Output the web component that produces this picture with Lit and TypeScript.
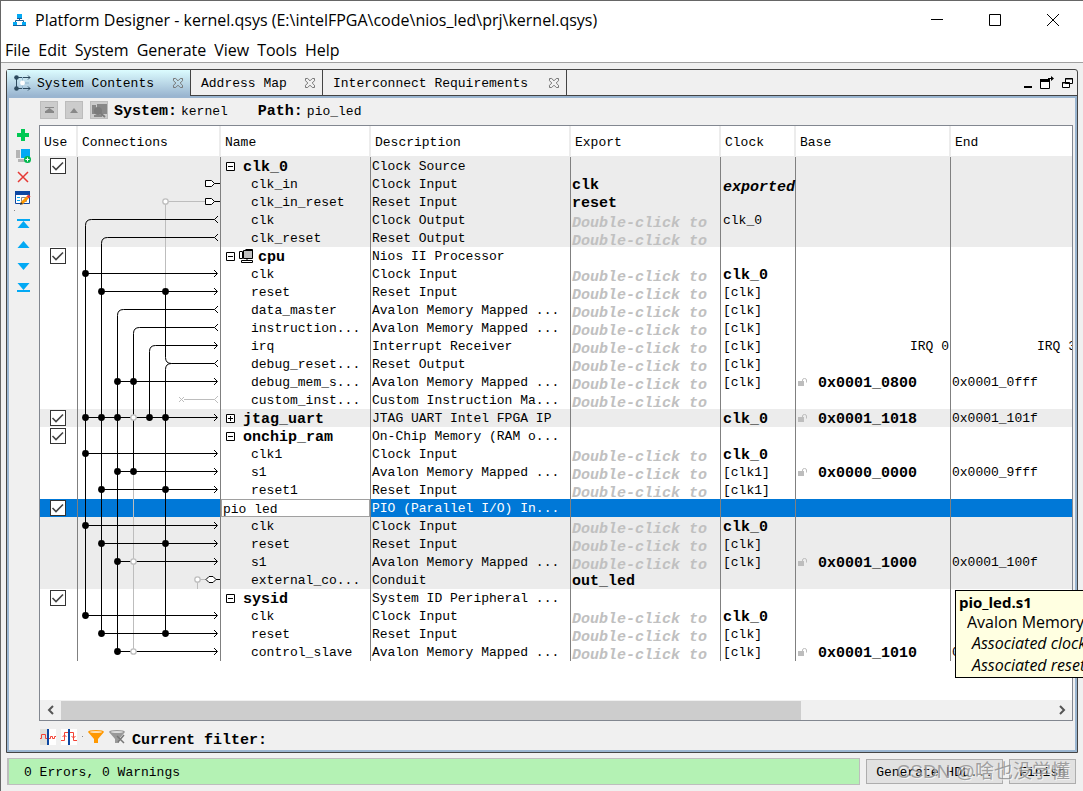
import { LitElement, html, css, svg, nothing } from "lit";
import { customElement, state } from "lit/decorators.js";
import { classMap } from "lit/directives/class-map.js";

type Row = {
  name: string;
  desc: string;
  parent?: boolean;
  collapsed?: boolean;
  cpu?: boolean;
  selected?: boolean;
  shade?: boolean;
  exp?: string;
  ask?: boolean;
  clock?: string;
  clockStyle?: "bold" | "exported";
  base?: string;
  end?: string;
  irq?: boolean;
};

const AVALON = "Avalon Memory Mapped ...";

const ROWS: Row[] = [
  { name: "clk_0", desc: "Clock Source", parent: true, shade: true },
  { name: "clk_in", desc: "Clock Input", shade: true, exp: "clk", clock: "exported", clockStyle: "exported" },
  { name: "clk_in_reset", desc: "Reset Input", shade: true, exp: "reset" },
  { name: "clk", desc: "Clock Output", shade: true, ask: true, clock: "clk_0" },
  { name: "clk_reset", desc: "Reset Output", shade: true, ask: true },
  { name: "cpu", desc: "Nios II Processor", parent: true, cpu: true },
  { name: "clk", desc: "Clock Input", ask: true, clock: "clk_0", clockStyle: "bold" },
  { name: "reset", desc: "Reset Input", ask: true, clock: "[clk]" },
  { name: "data_master", desc: AVALON, ask: true, clock: "[clk]" },
  { name: "instruction...", desc: AVALON, ask: true, clock: "[clk]" },
  { name: "irq", desc: "Interrupt Receiver", ask: true, clock: "[clk]", irq: true },
  { name: "debug_reset...", desc: "Reset Output", ask: true, clock: "[clk]" },
  { name: "debug_mem_s...", desc: AVALON, ask: true, clock: "[clk]", base: "0x0001_0800", end: "0x0001_0fff" },
  { name: "custom_inst...", desc: "Custom Instruction Ma...", ask: true },
  { name: "jtag_uart", desc: "JTAG UART Intel FPGA IP", parent: true, collapsed: true, shade: true, clock: "clk_0", clockStyle: "bold", base: "0x0001_1018", end: "0x0001_101f" },
  { name: "onchip_ram", desc: "On-Chip Memory (RAM o...", parent: true },
  { name: "clk1", desc: "Clock Input", ask: true, clock: "clk_0", clockStyle: "bold" },
  { name: "s1", desc: AVALON, ask: true, clock: "[clk1]", base: "0x0000_0000", end: "0x0000_9fff" },
  { name: "reset1", desc: "Reset Input", ask: true, clock: "[clk1]" },
  { name: "pio led", desc: "PIO (Parallel I/O) In...", parent: true, selected: true },
  { name: "clk", desc: "Clock Input", shade: true, ask: true, clock: "clk_0", clockStyle: "bold" },
  { name: "reset", desc: "Reset Input", shade: true, ask: true, clock: "[clk]" },
  { name: "s1", desc: AVALON, shade: true, ask: true, clock: "[clk]", base: "0x0001_1000", end: "0x0001_100f" },
  { name: "external_co...", desc: "Conduit", shade: true, exp: "out_led" },
  { name: "sysid", desc: "System ID Peripheral ...", parent: true },
  { name: "clk", desc: "Clock Input", ask: true, clock: "clk_0", clockStyle: "bold" },
  { name: "reset", desc: "Reset Input", ask: true, clock: "[clk]" },
  { name: "control_slave", desc: AVALON, ask: true, clock: "[clk]", base: "0x0001_1010", end: "0x0001_1017" },
];

const ROW_H = 18;
const BUS = [7.5, 23.5, 39.5, 55.5, 71.5, 87.5];
const y = (row: number) => row * ROW_H + 8.5;

/* Input rows: row index followed by the buses that the wire touches. */
const TAPS: [number, number[]][] = [
  [6, [0]],
  [7, [1, 5]],
  [12, [2, 3]],
  [14, [0, 1, 2, 4, 5]],
  [16, [0]],
  [17, [2, 3]],
  [18, [1, 5]],
  [20, [0]],
  [21, [1, 5]],
  [22, [2]],
  [25, [0]],
  [26, [1, 5]],
  [27, [2]],
];

/* Buses that start at a row with a rounded corner: bus, first row, last row. */
const SOURCES: [number, number, number][] = [
  [0, 3, 25],
  [1, 4, 26],
  [2, 8, 27],
  [3, 9, 17],
  [4, 10, 14],
];

const tip = (row: number) => `M136 ${y(row) - 3.5}L139.5 ${y(row)}L136 ${y(row) + 3.5}`;
const fork = (row: number) => `M140 ${y(row) - 3.5}L136.5 ${y(row)}L140 ${y(row) + 3.5}`;
const pin = (row: number) => `M127.5 ${y(row) - 3}h6l3 3l-3 3h-6zM136.5 ${y(row)}H142`;

function connections() {
  return svg`
    <g fill="none" stroke="#bdbdbd">
      <path d="M${BUS[5]} ${y(2)}V${y(7)}M${BUS[5]} ${y(2)}H127"/>
      <path d="M${BUS[3]} ${y(17)}V${y(27)}"/>
      <path d="M119.5 ${y(23)}V${24 * ROW_H}M119.5 ${y(23)}H128"/>
      <path d="M101 ${y(13) - 2.5}l5 5m0-5l-5 5M106 ${y(13)}H136.5${fork(13)}"/>
    </g>
    <g fill="none" stroke="#000">
      ${SOURCES.map(([b, from, to]) => svg`
        <path d="M${BUS[b]} ${y(to)}V${y(from) + 6}Q${BUS[b]} ${y(from)} ${BUS[b] + 6} ${y(from)}H${b === 4 ? 139 : 136.5}"/>`)}
      <path d="M${BUS[5]} ${y(7)}V${y(11) - 6}Q${BUS[5]} ${y(11)} ${BUS[5] + 6} ${y(11)}H136.5"/>
      <path d="M${BUS[5]} ${y(26)}V${y(11) + 6}Q${BUS[5]} ${y(11)} ${BUS[5] + 6} ${y(11)}"/>
      ${TAPS.map(([r, b]) => svg`<path d="M${BUS[b[0]]} ${y(r)}H139${tip(r)}"/>`)}
      <path d="${tip(10)}${fork(3)}${fork(4)}${fork(8)}${fork(9)}${fork(11)}"/>
      <path fill="#fff" d="${pin(1)}${pin(2)}"/>
      <path fill="#fff" d="M128 ${y(23)}l3-3h4l3 3l-3 3h-4zM138 ${y(23)}H142"/>
    </g>
    ${TAPS.map(([r, bs]) => bs.map((b) => svg`<circle cx="${BUS[b]}" cy="${y(r)}" r="3.4"/>`))}
    <g fill="#fff" stroke="#bdbdbd" stroke-width="1.3">
      <circle cx="${BUS[5]}" cy="${y(2)}" r="2.7"/>
      <circle cx="${BUS[3]}" cy="${y(14)}" r="2.7"/>
      <circle cx="${BUS[3]}" cy="${y(22)}" r="2.7"/>
      <circle cx="${BUS[3]}" cy="${y(27)}" r="2.7"/>
      <circle cx="119.5" cy="${y(23)}" r="2.7"/>
    </g>`;
}

const closeGlyph = html`<svg width="12" height="12" viewBox="0 0 12 12" fill="none" stroke="#777">
  <path d="M1.5 1.5h2.2L6 3.8l2.3-2.3h2.2v2.2L8.2 6l2.3 2.3v2.2H8.3L6 8.2l-2.3 2.3H1.5v-2.2L3.8 6L1.5 3.7z"/></svg>`;

const lock = html`<svg width="10" height="9" viewBox="0 0 10 9">
  <path fill="#bdbdbd" d="M0 3h6v5H0z"/><path fill="none" stroke="#bdbdbd" d="M4.5 3V2q0-1.500 2-1.500t2 1.500v2.500"/></svg>`;

@customElement("app-root")
export class AppRoot extends LitElement {
  static styles = css`
    :host {
      --mono: "Liberation Mono", monospace;
      --ui: "Open Sans", "Noto Sans", sans-serif;
      --face: #f0f0f0;
      --dark: #444;
      --edge: #9ab5d0;
      --grid: #808080;
      display: flex;
      flex-direction: column;
      position: relative;
      box-sizing: border-box;
      height: 100vh;
      overflow: hidden;
      border: 1px solid #666;
      border-width: 1px 0 0 1px;
      background: var(--face);
      color: #000;
      font: 13px/18px var(--mono);
    }
    *, *::before { box-sizing: border-box; }
    svg { display: block; flex: none; }
    button {
      font: inherit;
      color: inherit;
      padding: 0;
      border: 0;
      background: none;
      display: flex;
      align-items: center;
      justify-content: center;
    }
    b, .bold { font-size: 15px; font-weight: 700; }

    .title { display: flex; align-items: center; height: 37px; background: #fff; padding: 0 1px 0 11px; font: 16px/20px var(--ui); }
    .title h1 { flex: 1; margin: 0 0 0 8px; font: inherit; white-space: nowrap; }
    .title button { width: 58px; height: 37px; }
    .menu { display: flex; gap: 8px; height: 25px; padding-left: 4px; background: #fff; border-bottom: 1px solid #a0a0a0; font: 16px/24px var(--ui); }
    .menu button { white-space: nowrap; }

    .panel { flex: 1; min-height: 0; display: flex; flex-direction: column; margin: 6px 5px 0; border: 1px solid var(--dark); border-radius: 3px 3px 0 0; }
    .tabs { display: flex; height: 26px; border-bottom: 1px solid var(--dark); }
    .tab { display: flex; align-items: center; justify-content: space-between; padding: 0 6px 0 10px; border-right: 1px solid var(--dark); white-space: nowrap; }
    .tab.t1 { width: 184px; padding-left: 7px; margin-bottom: -1px; background: linear-gradient(#dcfcff, #9ab5d0); }
    .tab.t2 { width: 132px; }
    .tab.t3 { width: 244px; }
    .tab .label { display: flex; align-items: center; gap: 6px; }
    .tab .text { padding-top: 2px; }
    .winops { display: flex; align-items: center; gap: 8px; margin-left: auto; padding-right: 3px; }

    .body { flex: 1; min-height: 0; display: flex; border: 2px solid var(--edge); }
    .side { width: 30px; display: flex; flex-direction: column; align-items: center; padding: 26px 2px 0 0; }
    .side button { width: 18px; height: 21px; }
    .side .dot { width: 1px; height: 1px; margin: 2px 18px 2px 0; background: #888; }
    .main { flex: 1; min-width: 0; display: flex; flex-direction: column; padding-right: 2px; }
    .path { display: flex; align-items: center; height: 24px; margin-bottom: 3px; padding-left: 1px; }
    .path button { width: 18px; height: 18px; margin-right: 7px; background: #ccc; border: 1px solid #bcbcbc; }
    .path b { margin-right: 4px; padding-top: 4px; }
    .path span { padding-top: 3px; }
    .path .sys { margin-right: 30px; }
    .path button + b { margin-left: -1px; }

    .grid { flex: 1; min-height: 0; display: flex; flex-direction: column; border: 1px solid #828790; background: #fff; }
    .view { flex: 1; min-height: 0; overflow: hidden; }
    table { table-layout: fixed; border-collapse: separate; border-spacing: 0; width: calc(100% + 5px); }
    th { height: 31px; padding: 4px 0 0 4px; text-align: left; font-weight: 400; background: #fff; border-bottom: 1px solid #ececec; box-shadow: inset -2px 0 #ececec; }
    .c-use { width: 38px; }
    .c-conn { width: 143px; }
    .c-name { width: 150px; }
    .c-desc { width: 200px; }
    .c-clock { width: 75px; }
    .c-base { width: 155px; }
    td { height: 18px; padding: 0 0 0 1px; white-space: nowrap; border-right: 1px solid var(--grid); line-height: 18px; }
    td:last-child, th:last-child { border-right: 0; box-shadow: none; }
    tr.shade td { background: #ececec; }
    tr.sel td { background: #0078d7; color: #fff; }
    .cell { display: flex; align-items: center; height: 18px; padding-top: 2px; }
    .cell.bold { padding-top: 4px; }
    .use { padding: 0; }
    .use input {
      appearance: none; display: block; width: 16px; height: 16px; margin: 1px 0 1px 10px; border: 1px solid #333;
      background: #fff url("data:image/svg+xml,%3Csvg xmlns='http://www.w3.org/2000/svg' viewBox='0 0 14 14'%3E%3Cpath d='M1.5 7l3.500 3.500L12 3.500' fill='none' stroke='%23444' stroke-width='1.600'/%3E%3C/svg%3E");
    }
    .use input:not(:checked) { background-image: none; }
    .conn { padding: 0; }
    .wires { position: absolute; pointer-events: none; }
    .wires-anchor { height: 18px; }
    .child { padding-left: 29px; }
    .parent { padding: 0 0 0 4px; gap: 8px; }
    .parent .bold, .base .bold { padding-top: 4px; }
    .parent.cpu { gap: 4px; }
    .toggle { width: 9px; height: 9px; flex: none; }
    .edit { padding: 0; }
    .edit input { display: block; width: 100%; height: 18px; padding: 2px 0 0 1px; border: 1px solid #a0a0a0; outline: 0; background: #fff; color: #000; font: inherit; line-height: 14px; }
    .cell.ask { color: #c0c0c0; font-style: italic; font-weight: 700; font-size: 15px; padding-top: 8px; }
    .clock { padding-left: 1px; }
    .cell.exported { font-style: italic; padding-top: 8px; }
    .base { padding: 0 0 0 1px; gap: 10px; }
    .irq { justify-content: flex-end; padding-right: 1px; }

    .scroll { display: flex; height: 20px; background: var(--face); }
    .scroll button { width: 21px; }
    .track { flex: 1; padding-top: 1px; }
    .thumb { width: 74.7%; height: 19px; background: #cdcdcd; }
    .filters { display: flex; align-items: center; height: 29px; padding: 2px 0 0 1px; gap: 5px; }
    .filters .gap { width: 1px; height: 1px; background: #888; }
    .filters b { margin-left: 2px; padding-top: 8px; }

    .status { display: flex; gap: 6px; height: 38px; padding: 5px 7px 6px 6px; }
    .msg { flex: 1; display: flex; align-items: center; padding: 2px 0 0 15px; border: 1px solid #bdbdbd; border-left-width: 2px; background: #b4f2b4; }
    .status button { height: 25px; margin-top: 1px; padding: 2px 9px 0; border: 1px solid #adadad; background: #e1e1e1; white-space: nowrap; }
    .mark { position: absolute; right: 13px; bottom: 5px; font: 19px/28px "Liberation Sans", "Noto Sans CJK SC", sans-serif; color: rgba(140, 140, 140, 0.8); text-shadow: 1px 1px rgba(255, 255, 255, 0.6); white-space: nowrap; pointer-events: none; }

    .tip { position: absolute; left: 954px; top: 589px; width: 200px; height: 88px; padding: 1px 3px; border: 1px solid #000; background: #ffffe1; font: 16px/20px var(--ui); white-space: nowrap; }
    .tip p { margin: 0; padding-left: 8px; }
    .tip .head { padding: 0; font-size: 15px; font-weight: 700; }
    .tip .assoc { padding-left: 13px; font-style: italic; line-height: 22px; }
  `;

  @state() private unused = new Set<number>();

  private toggleUse(i: number) {
    const next = new Set(this.unused);
    next.has(i) ? next.delete(i) : next.add(i);
    this.unused = next;
  }

  private nameCell(r: Row) {
    if (r.selected) {
      return html`<td class="edit"><input aria-label="Module name" .value=${r.name} /></td>`;
    }
    if (!r.parent) return html`<td><div class="cell child">${r.name}</div></td>`;
    return html`<td><div class=${classMap({ cell: true, parent: true, cpu: !!r.cpu })}>
      <button class="toggle" aria-label=${r.collapsed ? "Expand" : "Collapse"}>
        <svg width="9" height="9" viewBox="0 0 9 9" fill="#fff" stroke="#000">
          <path d="M.5.5h8v8h-8zM2 4.5h5${r.collapsed ? "M4.5 2v5" : ""}"/></svg>
      </button>
      ${r.cpu ? html`<svg width="15" height="14" viewBox="0 0 15 14" stroke="#000">
        <path fill="#fff" d="M.5 2.5h3v7h-3z"/><path fill="#c0c0c0" d="M4.5 1.5h9v8h-9zM6.5.5h7v8"/>
        <path fill="#fff" d="M2.5 11.5h11v2h-11zM8 9.5v2"/></svg>` : nothing}
      <span class="bold">${r.name}</span></div></td>`;
  }

  private row(r: Row, i: number) {
    return html`<tr class=${classMap({ shade: !!r.shade, sel: !!r.selected })}>
      <td class="use">${r.parent ? html`<input type="checkbox" aria-label="Use ${r.name}"
        .checked=${!this.unused.has(i)} @change=${() => this.toggleUse(i)} />` : nothing}</td>
      <td class="conn">${i === 0 ? html`<div class="wires-anchor">
        <svg class="wires" width="142" height="504" viewBox="0 0 142 504">${connections()}</svg></div>` : nothing}</td>
      ${this.nameCell(r)}
      <td><div class="cell">${r.desc}</div></td>
      <td><div class=${classMap({ cell: true, ask: !!r.ask, bold: !!r.exp })}>${r.ask ? "Double-click to" : r.exp ?? nothing}</div></td>
      <td><div class=${classMap({ cell: true, clock: true, bold: !!r.clockStyle, exported: r.clockStyle === "exported" })}>${r.clock ?? nothing}</div></td>
      <td>${r.base ? html`<div class="cell base">${lock}<span class="bold">${r.base}</span></div>`
        : r.irq ? html`<div class="cell irq">IRQ 0</div>` : nothing}</td>
      <td>${r.end ? html`<div class="cell">${r.end}</div>`
        : r.irq ? html`<div class="cell irq">IRQ 3</div>` : nothing}</td>
    </tr>`;
  }

  render() {
    return html`
      <header class="title">
        <svg width="15" height="14" viewBox="0 0 15 14">
          <path fill="#03a9f4" d="M5 1h5v5H5zM1 9h4v4H1zM10 9h4v4h-4z"/>
          <path fill="none" stroke="#1b5c94" d="M3.500 9V7.500h8V9M7.500 6v2M5 12.500h5"/>
          <path fill="#1b5c94" d="M5 5h5v1H5zM1 12h4v1H1zM10 12h4v1h-4z"/></svg>
        <h1>Platform Designer - kernel.qsys (E:\\intelFPGA\\code\\nios_led\\prj\\kernel.qsys)</h1>
        <button aria-label="Minimize"><svg width="12" height="12" viewBox="0 0 12 12" stroke="#000"><path d="M0 5.500h12"/></svg></button>
        <button aria-label="Maximize"><svg width="12" height="12" viewBox="0 0 12 12" fill="none" stroke="#000"><path d="M.5.5h11v11H.5z"/></svg></button>
        <button aria-label="Close"><svg width="12" height="12" viewBox="0 0 12 12" stroke="#000"><path d="M0 0l12 12M12 0L0 12"/></svg></button>
      </header>
      <nav class="menu">
        ${["File", "Edit", "System", "Generate", "View", "Tools", "Help"].map((m) => html`<button>${m}</button>`)}
      </nav>
      <section class="panel">
        <div class="tabs">
          <div class="tab t1"><span class="label">
            <svg width="17" height="16" viewBox="0 0 17 16">
              <path fill="none" stroke="#2d4a5e" d="M2.500 3v10M4 2.500h12M4 13.500h12M14 .5l2 2-2 2M14 11.500l2 2-2 2"/>
              <path fill="none" stroke="#8fb4cc" d="M8.500 2v4M8.500 10v4M11 8h4"/>
              <circle cx="2.500" cy="2.500" r="2.300" fill="#2d4a5e"/><circle cx="2.500" cy="13.500" r="2.300" fill="#2d4a5e"/>
              <circle cx="8.500" cy="8" r="2.400" fill="#fff"/></svg>
            <span class="text">System Contents</span></span><button aria-label="Close tab">${closeGlyph}</button></div>
          <div class="tab t2"><span class="text">Address Map</span><button aria-label="Close tab">${closeGlyph}</button></div>
          <div class="tab t3"><span class="text">Interconnect Requirements</span><button aria-label="Close tab">${closeGlyph}</button></div>
          <div class="winops">
            <button aria-label="Minimize panel"><svg width="8" height="12" viewBox="0 0 8 12"><path d="M0 9h8v2H0z"/></svg></button>
            <button aria-label="Detach"><svg width="14" height="13" viewBox="0 0 14 13"><path fill="#fff" stroke="#000" d="M.5 4.500h9v8h-9z"/><path d="M0 3h10v3H0zM8 2h3V0l3 2.500L11 5V3H8z"/></svg></button>
            <button aria-label="Restore panel"><svg width="12" height="12" viewBox="0 0 12 12" fill="#fff" stroke="#000"><path d="M3.500 1.500h7v5h-7zM3 2h8M.5 5.500h7v5h-7zM0 6h8"/></svg></button>
          </div>
        </div>
        <div class="body">
          <div class="side">
            <button aria-label="Add"><svg width="12" height="12" viewBox="0 0 12 12"><path fill="#00c853" d="M4 0h4v4h4v4H8v4H4V8H0V4h4z"/></svg></button>
            <button aria-label="Add subsystem"><svg width="15" height="15" viewBox="0 0 15 15"><path fill="#b5b5b5" d="M0 2h4v8H0zM2 11h8v3H2z"/><path fill="#03a9f4" d="M5 1h9v9H5z"/><circle cx="11.500" cy="11.500" r="3.500" fill="#00b84d"/><path stroke="#fff" d="M11.500 9.500v4M9.500 11.500h4"/></svg></button>
            <button aria-label="Remove"><svg width="12" height="12" viewBox="0 0 12 12" fill="none" stroke="#e53935" stroke-width="1.500"><path d="M1 1l10 10M11 1L1 11"/></svg></button>
            <button aria-label="Edit"><svg width="16" height="14" viewBox="0 0 16 14"><path fill="#fff" stroke="#0d47a1" d="M.5.5h14v12H.5z"/><path fill="#0d47a1" d="M0 0h15v4H0z"/><path stroke="#03a9f4" d="M2 6.500h3M2 9.500h3"/><path stroke="#888" fill="none" d="M6.500 6.500h5v4h-5z"/><path stroke="#ff9800" stroke-width="3" d="M6.500 12.500l6-6"/><path stroke="#e53935" stroke-width="3" d="M12.500 6.500l2-2"/><path fill="#333" d="M5 14l1-3 2 2z"/></svg></button>
            <span class="dot"></span>
            <button aria-label="Move to top"><svg width="13" height="10" viewBox="0 0 13 10" fill="#03a9f4"><path d="M0 0h13v2H0zM6.500 2l6 7H.5z"/></svg></button>
            <button aria-label="Move up"><svg width="13" height="8" viewBox="0 0 13 8" fill="#03a9f4"><path d="M6.500 0l6 7H.5z"/></svg></button>
            <button aria-label="Move down"><svg width="13" height="8" viewBox="0 0 13 8" fill="#03a9f4"><path d="M6.500 8l6-7H.5z"/></svg></button>
            <button aria-label="Move to bottom"><svg width="13" height="10" viewBox="0 0 13 10" fill="#03a9f4"><path d="M0 8h13v2H0zM6.500 8l6-7H.5z"/></svg></button>
          </div>
          <div class="main">
            <div class="path">
              <button aria-label="Go to top"><svg width="9" height="7" viewBox="0 0 9 7" fill="#888"><path d="M0 0h9v1H0zM4.500 1l4 3H6v0H9v2H0V4h.5z"/></svg></button>
              <button aria-label="Go up"><svg width="8" height="5" viewBox="0 0 8 5" fill="#888"><path d="M4 0l4 5H0z"/></svg></button>
              <button aria-label="Drill in"><svg width="15" height="15" viewBox="0 0 15 15" fill="#888"><path d="M0 2h4v9H0zM5 1h10v10H5zM2 12h8v2H2z"/><circle cx="6" cy="8" r="4" fill="#7c7c7c"/><path stroke="#7c7c7c" stroke-width="2" d="M8 10l5 4"/></svg></button>
              <b>System:</b><span class="sys">kernel</span><b>Path:</b><span>pio_led</span>
            </div>
            <div class="grid">
              <div class="view">
                <table>
                  <thead><tr>
                    <th class="c-use">Use</th><th class="c-conn">Connections</th><th class="c-name">Name</th>
                    <th class="c-desc">Description</th><th class="c-name">Export</th><th class="c-clock">Clock</th>
                    <th class="c-base">Base</th><th>End</th>
                  </tr></thead>
                  <tbody>${ROWS.map((r, i) => this.row(r, i))}</tbody>
                </table>
              </div>
              <div class="scroll">
                <button aria-label="Scroll left"><svg width="8" height="10" viewBox="0 0 8 10" fill="none" stroke="#555" stroke-width="2"><path d="M6 1L2 5l4 4"/></svg></button>
                <div class="track"><div class="thumb"></div></div>
                <button aria-label="Scroll right"><svg width="8" height="10" viewBox="0 0 8 10" fill="none" stroke="#555" stroke-width="2"><path d="M2 1l4 4-4 4"/></svg></button>
              </div>
            </div>
            <div class="filters">
              <button aria-label="Clock domains"><svg width="16" height="16" viewBox="0 0 16 16"><path fill="#fff" d="M0 0h16v16H0z"/><path fill="#e0e0dc" d="M0 0h7v16H0z"/><path fill="none" stroke="#f44336" d="M0 9.500h1.500v-4h4v4H7M9 9.500h1.500v-2h2v2h2v-2H16"/><path fill="#0d47a1" d="M7 0h2v16H7z"/></svg></button>
              <button aria-label="Reset domains"><svg width="16" height="16" viewBox="0 0 16 16"><path fill="#fff" d="M0 0h16v16H0z"/><path fill="none" stroke="#f44336" d="M0 11.500h3.500v-8h9v8H16M1.500 8l2-2 2 2M10.500 7l2 2 2-2"/><path fill="#0d47a1" d="M7 0h2v16H7z"/></svg></button>
              <span class="gap"></span>
              <button aria-label="Filters"><svg width="16" height="14" viewBox="0 0 16 14"><path fill="#ff9800" d="M0 2Q0 0 8 0t8 2l-6 7v4H6V9z"/><ellipse cx="8" cy="2" rx="6" ry="1" fill="#ffe0b2"/></svg></button>
              <button aria-label="Clear filter"><svg width="16" height="14" viewBox="0 0 16 14"><path fill="#999" d="M0 2Q0 0 8 0t8 2l-6 7v4H6V9z"/><ellipse cx="8" cy="2" rx="6" ry="1" fill="#ddd"/><path stroke="#777" stroke-width="1.500" d="M8 6l7 7M15 5l-6 7"/></svg></button>
              <b>Current filter:</b>
            </div>
          </div>
        </div>
      </section>
      <footer class="status">
        <div class="msg">0 Errors, 0 Warnings</div>
        <button>Generate HDL...</button>
        <button>Finish</button>
      </footer>
      <div class="tip" role="tooltip">
        <p class="head">pio_led.s1</p>
        <p>Avalon Memory</p>
        <p class="assoc">Associated clock</p>
        <p class="assoc">Associated reset</p>
      </div>
      <div class="mark">CSDN @啥也没学懂</div>
    `;
  }
}
